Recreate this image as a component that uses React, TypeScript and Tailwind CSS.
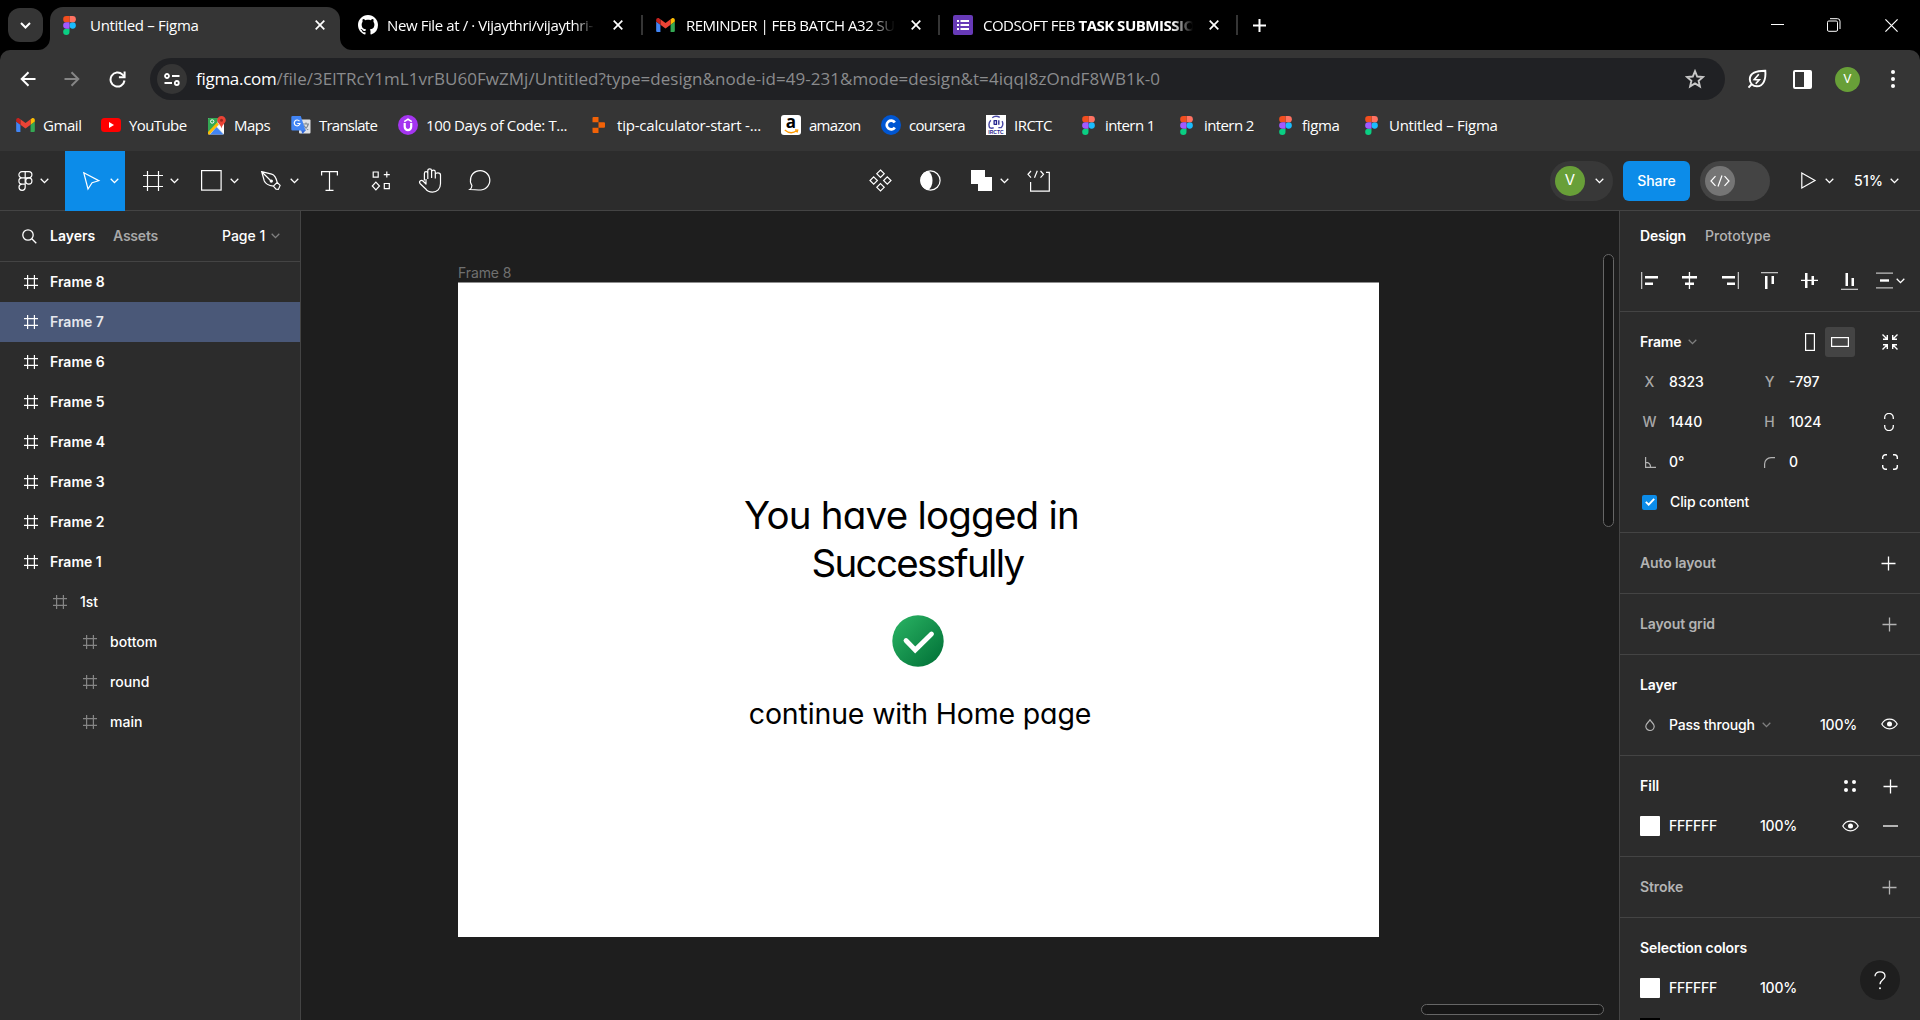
import type { ReactNode } from "react";

const INTER = "font-['Inter',sans-serif]";
const SEGOE = "font-['Open_Sans',sans-serif]";

function Chevron({ className = "" }: { className?: string }) {
  return (
    <svg className={"h-[6px] w-[9px] shrink-0 " + className} viewBox="0 0 9 6" fill="none" stroke="currentColor" strokeWidth="1.3">
      <path d="M.7 .8 4.5 4.6 8.3 .8" />
    </svg>
  );
}

function FigmaMark({ className = "" }: { className?: string }) {
  return (
    <svg className={"h-[19px] w-[13px] shrink-0 " + className} viewBox="0 0 38 57">
      <path fill="#1abcfe" d="M19 28.5a9.5 9.5 0 1 1 19 0 9.5 9.5 0 0 1-19 0z" />
      <path fill="#0acf83" d="M0 47.5A9.5 9.5 0 0 1 9.5 38H19v9.500a9.500 9.500 0 1 1-19 0z" />
      <path fill="#ff7262" d="M19 0v19h9.500a9.500 9.500 0 1 0 0-19H19z" />
      <path fill="#f24e1e" d="M0 9.500A9.500 9.500 0 0 0 9.500 19H19V0H9.500A9.500 9.500 0 0 0 0 9.500z" />
      <path fill="#a259ff" d="M0 28.500A9.500 9.500 0 0 0 9.500 38H19V19H9.500A9.500 9.500 0 0 0 0 28.500z" />
    </svg>
  );
}

function GmailMark() {
  return (
    <svg className="h-[14px] w-[19px] shrink-0" viewBox="52 42 88 66">
      <path fill="#4285f4" d="M58 108h14V74L52 59v43c0 3.320 2.690 6 6 6" />
      <path fill="#34a853" d="M120 108h14c3.320 0 6-2.690 6-6V59l-20 15" />
      <path fill="#fbbc04" d="M120 48v26l20-15v-8c0-7.420-8.470-11.650-14.400-7.200" />
      <path fill="#ea4335" d="M72 74V48l24 18 24-18v26L96 92" />
      <path fill="#c5221f" d="M52 51v8l20 15V48l-5.600-4.200c-5.940-4.450-14.400-.22-14.400 7.200" />
    </svg>
  );
}

function CloseX({ className = "" }: { className?: string }) {
  return (
    <svg className={"h-[10px] w-[10px] shrink-0 " + className} viewBox="0 0 10 10" fill="none" stroke="#fff" strokeWidth="1.7">
      <path d="M.7 .7 9.300 9.300M9.300 .7 .7 9.300" />
    </svg>
  );
}

function TabStrip() {
  return (
    <div className={"flex h-[50px] items-start bg-black text-[15px] text-white " + SEGOE}>
      <div className="ml-2 mt-2 flex h-[34px] w-[35px] items-center justify-center rounded-[12px] bg-[#353535]">
        <svg className="h-[7px] w-[11px]" viewBox="0 0 11 7" fill="none" stroke="#fff" strokeWidth="2">
          <path d="M1 1l4.500 4.500L10 1" />
        </svg>
      </div>
      <div className="relative ml-[7px] mt-[7px] flex h-[43px] w-[290px] items-center rounded-t-[13px] bg-[#353535] pb-[7px]">
        <svg className="absolute bottom-0 -left-3 h-3 w-3" viewBox="0 0 12 12"><path fill="#353535" d="M12 0v12H0A12 12 0 0 0 12 0z" /></svg>
        <svg className="absolute bottom-0 -right-3 h-3 w-3" viewBox="0 0 12 12"><path fill="#353535" d="M0 0v12h12A12 12 0 0 1 0 0z" /></svg>
        <FigmaMark className="ml-[13px]" />
        <span className="ml-[14px] w-[229px] whitespace-nowrap leading-[20px] tracking-[-0.29px]">Untitled – Figma</span>
        <CloseX className="-ml-[4px]" />
      </div>
      <div className="flex h-[50px] items-center">
        <svg className="ml-[18px] h-[20px] w-[20px] shrink-0" viewBox="0 0 16 16" fill="#fff">
          <path d="M8 0C3.580 0 0 3.580 0 8c0 3.540 2.290 6.530 5.470 7.590.4.070.55-.17.55-.38 0-.19-.01-.82-.01-1.490-2.010.37-2.530-.49-2.690-.94-.09-.23-.48-.94-.82-1.130-.28-.15-.68-.52-.01-.53.63-.01 1.080.58 1.230.82.72 1.210 1.870.87 2.330.66.07-.52.28-.87.51-1.070-1.780-.2-3.640-.89-3.640-3.950 0-.87.31-1.590.82-2.150-.08-.2-.36-1.020.08-2.120 0 0 .67-.21 2.200.82.64-.18 1.320-.27 2-.27s1.360.09 2 .27c1.530-1.040 2.200-.82 2.200-.82.44 1.100.16 1.920.08 2.120.51.56.82 1.270.82 2.150 0 3.070-1.870 3.750-3.650 3.950.29.25.54.73.54 1.480 0 1.070-.01 1.930-.01 2.200 0 .21.15.46.55.38A8.010 8.010 0 0 0 16 8c0-4.420-3.580-8-8-8z" />
        </svg>
        <span className="ml-[9px] w-[208px] whitespace-nowrap leading-[22px] tracking-[-0.4px] [mask-image:linear-gradient(to_right,#000_90%,transparent)]">New File at / · Vijaythri/vijaythri-</span>
        <CloseX className="ml-[18px]" />
        <i className="ml-[18px] h-5 w-[2px] bg-[#353535]" />
        <span className="ml-[13px] flex"><GmailMark /></span>
        <span className="ml-[11px] w-[209px] whitespace-nowrap leading-[22px] tracking-[-0.5px] [mask-image:linear-gradient(to_right,#000_88%,transparent)]">REMINDER | FEB BATCH A32 SU</span>
        <CloseX className="ml-[16px]" />
        <i className="ml-[17px] h-5 w-[2px] bg-[#353535]" />
        <span className="ml-[13px] flex h-5 w-5 items-center justify-center rounded-[2px] bg-[#673ab7]">
          <svg className="h-[10px] w-3" viewBox="0 0 12 10" fill="#fff">
            <path d="M0 0h2v2H0zM3.500 0H12v2H3.500zM0 4h2v2H0zM3.500 4H12v2H3.500zM0 8h2v2H0zM3.500 8H12v2H3.500z" />
          </svg>
        </span>
        <span className="ml-[10px] w-[210px] whitespace-nowrap leading-[22px] tracking-[-0.5px] [mask-image:linear-gradient(to_right,#000_90%,transparent)]">CODSOFT FEB <b className="font-bold tracking-[-0.5px]">TASK SUBMISSIO</b></span>
        <CloseX className="ml-[16px]" />
        <i className="ml-[17px] h-5 w-[2px] bg-[#353535]" />
        <svg className="ml-[15px] h-[13px] w-[13px]" viewBox="0 0 13 13" fill="none" stroke="#fff" strokeWidth="2"><path d="M6.500 0v13M0 6.500h13" /></svg>
      </div>
      <div className="ml-auto flex h-[50px] items-center pr-[22px]">
        <svg className="h-[14px] w-[13px]" viewBox="0 0 13 14" stroke="#fff"><path d="M0 6.500h13" /></svg>
        <svg className="ml-[43px] h-[14px] w-[14px]" viewBox="0 0 14 14" fill="none" stroke="#fff">
          <rect x=".5" y="3" width="10" height="10.300" rx="1.300" /><path d="M3 .7h7.500a2.500 2.500 0 0 1 2.500 2.500V11" />
        </svg>
        <svg className="ml-[44px] h-[13px] w-[13px]" viewBox="0 0 13 13" fill="none" stroke="#fff" strokeWidth="1.200"><path d="M.4 .4l12.200 12.200M12.600 .4.4 12.600" /></svg>
      </div>
    </div>
  );
}

function AddressRow() {
  return (
    <div className={"flex h-[58px] items-center " + SEGOE}>
      <svg className="ml-[20px] h-4 w-4" viewBox="0 0 16 16" fill="none" stroke="#fff" strokeWidth="2"><path d="M15.500 8H2M8.500 1.200 1.700 8l6.800 6.800" /></svg>
      <svg className="ml-[28px] h-4 w-4" viewBox="0 0 16 16" fill="none" stroke="#858585" strokeWidth="2"><path d="M.5 8H14M7.500 1.200 14.300 8l-6.800 6.800" /></svg>
      <svg className="ml-[29px] h-[17px] w-[17px]" viewBox="0 0 17 17" fill="none" stroke="#fff" strokeWidth="2">
        <path d="M15.500 9.500A7 7 0 1 1 13.500 3.600l1.800 1.800" /><path d="M15.600 .5v5.700h-5.700" />
      </svg>
      <div className="ml-[24px] flex h-[42px] w-[1575px] items-center rounded-full bg-[#202124]">
        <div className="ml-[7px] flex h-[30px] w-[30px] items-center justify-center rounded-full bg-[#353535]">
          <svg className="h-[13px] w-4" viewBox="0 0 16 13" fill="none" stroke="#fff" strokeWidth="1.800">
            <circle cx="3" cy="3" r="2" /><path d="M8 3h7.500M.5 10H8" /><circle cx="12.800" cy="10" r="2" />
          </svg>
        </div>
        <div className="ml-[9px] whitespace-nowrap text-[17px] leading-[24px] text-white">
          <span className="tracking-[-0.28px]">figma.com</span><span className="tracking-[0.04px] text-[#8a8b8d]">/file/3ElTRcY1mL1vrBU60FwZMj/Untitled?type=design&amp;node-id=49-231&amp;mode=design&amp;t=4iqqI8zOndF8WB1k-0</span>
        </div>
        <svg className="ml-auto mr-[20px] h-5 w-5" viewBox="0 0 20 20" fill="none" stroke="#c8c8c8" strokeWidth="1.900">
          <path d="M10 2.200l2.200 5.300 5.800.5-4.400 3.800 1.300 5.600L10 14.400l-4.900 3 1.300-5.600L2 8l5.800-.5z" />
        </svg>
      </div>
      <svg className="ml-[22px] h-[20px] w-[20px]" viewBox="0 0 20 20" fill="none" stroke="#fff" strokeWidth="1.900">
        <path d="M18.300 1.700c.8 9-2 15.600-8.300 15.600a7 7 0 0 1-7.200-7C2.800 4.300 9 1.600 18.300 1.700zM1.500 18.700l2.900-3.200" />
        <path d="M11.800 5.300 7.300 10.500l5 .3-3.600 4" strokeWidth="1.700" />
      </svg>
      <svg className="ml-[26px] h-[19px] w-[19px]" viewBox="0 0 19 19"><path fill="#fff" fillRule="evenodd" d="M2 0h15a2 2 0 0 1 2 2v15a2 2 0 0 1-2 2H2a2 2 0 0 1-2-2V2a2 2 0 0 1 2-2zm0 2v15h9V2z" /></svg>
      <div className="ml-[23px] flex h-[25px] w-[25px] items-center justify-center rounded-full bg-[#689f38] font-['Roboto',sans-serif] text-[13px] text-white">V</div>
      <svg className="ml-[31px] h-[18px] w-[4px]" viewBox="0 0 4 18" fill="#fff"><circle cx="2" cy="2" r="2" /><circle cx="2" cy="9" r="2" /><circle cx="2" cy="16" r="2" /></svg>
    </div>
  );
}

function Bookmark({ icon, label, box, text }: { icon: ReactNode; label: string; box: string; text: string }) {
  return (
    <div className={"flex shrink-0 items-center " + box}>
      {icon}
      <span className={"whitespace-nowrap leading-[20px] " + text}>{label}</span>
    </div>
  );
}

function Bookmarks() {
  return (
    <div className={"flex h-[43px] items-start pt-[7px] pl-4 text-[15px] text-white " + SEGOE}>
      <Bookmark box="h-5 w-[85px]" text="ml-[8px] tracking-[-0.44px]" label="Gmail" icon={<GmailMark />} />
      <Bookmark box="h-5 w-[107px]" text="ml-[8px] tracking-[-0.60px]" label="YouTube" icon={
        <svg className="h-[14px] w-5" viewBox="0 0 20 14"><rect width="20" height="14" rx="3.500" fill="red" /><path fill="#fff" d="M8 4v6l5-3z" /></svg>
      } />
      <Bookmark box="h-5 w-[83px]" text="ml-[8px] tracking-[-0.5px]" label="Maps" icon={
        <svg className="h-[19px] w-[18px]" viewBox="0 0 18 19">
          <rect y="2" width="16" height="16.500" rx="1" fill="#e8eaed" />
          <path fill="#34a853" d="M0 3a1 1 0 0 1 1-1h9L9 9l-9 8z" />
          <path fill="#4285f4" d="M2 18.500 8.500 11l7 7.500z" />
          <path fill="#fbbc04" d="M0 16 9 6.500l1.800 2L1.500 18.500H1a1 1 0 0 1-1-1z" />
          <path fill="#fff" d="M9.500 10.500l6.500 7V9z" />
          <circle cx="4.200" cy="5.500" r="1.700" fill="none" stroke="#fff" />
          <path fill="#ea4335" d="M13.500 0A4.300 4.300 0 0 0 9.200 4.300c0 2.700 3.500 4 4.300 8.200.8-4.200 4.300-5.500 4.300-8.200A4.300 4.300 0 0 0 13.500 0z" />
          <circle cx="13.500" cy="4.300" r="1.500" fill="#99281f" />
        </svg>
      } />
      <Bookmark box="h-5 w-[107px]" text="ml-[8px] tracking-[-0.77px]" label="Translate" icon={
        <svg className="h-[20px] w-5" viewBox="0 0 20 20">
          <rect x="8" y="4.500" width="11.500" height="14" rx="1" fill="#dfe1e5" />
          <path d="M12 9h6M15 7.500V9m2.200 0c-.4 2.600-2 4.600-4.200 5.800M13 10.500c.9 2 2.300 3.300 4.200 4.300" stroke="#7b8794" strokeWidth="1.200" fill="none" />
          <path fill="#3367d6" d="M10 15h5l-3.500 4z" />
          <path fill="#4285f4" d="M1.500 1h8.300l4.700 14.500h-13A1.200 1.200 0 0 1 .3 14.300V2.200A1.200 1.200 0 0 1 1.500 1z" />
          <path d="M8.500 6.200A2.900 2.900 0 1 0 9 8.500H6.300" stroke="#fff" strokeWidth="1.200" fill="none" />
        </svg>
      } />
      <Bookmark box="h-5 w-[194px]" text="ml-[8px] tracking-[-0.38px]" label="100 Days of Code: T..." icon={
        <svg className="h-5 w-5" viewBox="0 0 20 20"><circle cx="10" cy="10" r="10" fill="#a435f0" /><path d="M6.700 8v3.800a3.200 3.200 0 0 0 6.500 0V8" stroke="#fff" strokeWidth="2.200" fill="none" /><path d="M6.200 6.600 10 4.300l3.800 2.300" stroke="#fff" strokeWidth="1.600" fill="none" /></svg>
      } />
      <Bookmark box="h-5 w-[189px]" text="ml-[11px] tracking-[-0.21px]" label="tip-calculator-start -..." icon={
        <svg className="h-4 w-[14px]" viewBox="0 0 14 16"><path fill="#f26207" d="M1.500 0h5v5.300h-6V1a1 1 0 0 1 1-1zM6.500 5.300H12a1 1 0 0 1 1 1v3.400a1 1 0 0 1-1 1H6.500zM.5 10.700h6V16h-5a1 1 0 0 1-1-1z" /></svg>
      } />
      <Bookmark box="h-5 w-[100px]" text="ml-[8px] tracking-[-0.72px]" label="amazon" icon={
        <span className="relative flex h-5 w-5 justify-center rounded-[3px] bg-white text-[17px] font-bold leading-[13px] text-black">
          a
          <svg className="absolute bottom-[1px] left-[3px] h-[5px] w-[15px]" viewBox="0 0 15 5" fill="none" stroke="#f90" strokeWidth="1.300"><path d="M.8 1c3.800 3.300 8.300 3.400 12 .8M11 .8l2.700.2-.7 2.500" /></svg>
        </span>
      } />
      <Bookmark box="h-5 w-[105px]" text="ml-[8px] tracking-[-0.7px]" label="coursera" icon={
        <svg className="h-5 w-5" viewBox="0 0 20 20"><circle cx="10" cy="10" r="10" fill="#0056d2" /><path d="M13.800 7.600A4.400 4.400 0 1 0 13.800 12.400" stroke="#fff" strokeWidth="2.700" fill="none" /></svg>
      } />
      <Bookmark box="h-5 w-[96px]" text="ml-[8px] tracking-[-0.52px]" label="IRCTC" icon={
        <span className="relative flex h-5 w-5 items-end justify-center bg-white font-['Liberation_Sans',sans-serif] text-[5px] font-bold leading-[5px] text-[#25258e]">
          <svg className="absolute left-0 top-0 h-[15px] w-5" viewBox="0 0 20 16" fill="none" stroke="#4a4aa6" strokeWidth="1.500"><path d="M6 3C8.500 .8 11 .8 14 2.500M16.500 6.500c1.500 3 1 5-1 7h-3M4.500 5.500c-2 2-2.500 5-1.300 8 1.700.8 3 .8 4.300 0" /><path d="M8 5.500v5M8 6h2.500v4H8M13 5.500v5" stroke="#25258e" strokeWidth="1.400" /></svg>
          IRCTC
        </span>
      } />
      <Bookmark box="h-5 w-[98px]" text="ml-[10px] tracking-[-0.6px]" label="intern 1" icon={<FigmaMark />} />
      <Bookmark box="h-5 w-[99px]" text="ml-[11px] tracking-[-0.6px]" label="intern 2" icon={<FigmaMark />} />
      <Bookmark box="h-5 w-[86px]" text="ml-[10px] tracking-[-0.34px]" label="figma" icon={<FigmaMark />} />
      <Bookmark box="h-5" text="ml-[11px] tracking-[-0.29px]" label="Untitled – Figma" icon={<FigmaMark />} />
    </div>
  );
}

const ic = "shrink-0 overflow-visible";

function FigmaToolbar() {
  return (
    <div className={"flex h-[60px] items-center border-b border-[#444] bg-[#2c2c2c] text-white " + INTER}>
      <svg className={ic + " ml-[18px] h-[20px] w-[15px]"} viewBox="0 0 15 20" fill="none" stroke="#fff" strokeWidth="1.200">
        <path d="M7.200 .7H4a3.100 3.100 0 0 0 0 6.200h3.200zM7.200 .7h3.600a3.100 3.100 0 0 1 0 6.200H7.200zM7.200 6.900H4a3.100 3.100 0 0 0 0 6.200h3.200zM4 13.100a3.100 3.100 0 1 0 3.200 3.100v-3.100z" /><circle cx="10.800" cy="10" r="3.100" />
      </svg>
      <Chevron className="ml-[7px]" />
      <div className="ml-[16px] flex h-[60px] w-[60px] items-center bg-[#0c8ce9]">
        <svg className={ic + " ml-[18px] h-[18px] w-[17px]"} viewBox="0 0 17 18" fill="none" stroke="#fff" strokeWidth="1.200"><path d="M.8 .8l15 7.900-6.700 2L5 17z" /></svg>
        <Chevron className="ml-[10px]" />
      </div>
      <svg className={ic + " ml-[18px] h-[20px] w-[20px]"} viewBox="0 0 20 20" fill="none" stroke="#fff" strokeWidth="1.200"><path d="M4.500 0v20M15.500 0v20M0 4.500h20M0 15.500h20" /></svg>
      <Chevron className="ml-[7px]" />
      <svg className={ic + " ml-[22px] h-[21px] w-[21px]"} viewBox="0 0 21 21" fill="none" stroke="#fff" strokeWidth="1.200"><rect x=".6" y=".6" width="19.500" height="19.500" /></svg>
      <Chevron className="ml-[8px]" />
      <svg className={ic + " ml-[22px] h-[20px] w-[20px]"} viewBox="0 0 20 20" fill="none" stroke="#fff" strokeWidth="1.200">
        <path d="M.7 .7l10 2.400c2.500.7 4.500 3.800 5.500 8.200l-3.800 3.900C7.500 14.500 4.500 12.800 3.300 10zM.7 .7l8.600 8.500M16.200 11.300l2.900 3.100-1.700 4-2.400-.3-2.600-2.900" /><circle cx="10.300" cy="10.100" r="1.700" fill="#fff" stroke="none" />
      </svg>
      <Chevron className="ml-[9px]" />
      <svg className={ic + " ml-[22px] h-[20px] w-[17px]"} viewBox="0 0 17 20" fill="none" stroke="#fff" strokeWidth="1.200"><path d="M.6 4.500V.6h15.800v3.900M8.500 .6v18.800M4.500 19.400h8" /></svg>
      <svg className={ic + " ml-[34px] h-[19px] w-[19px]"} viewBox="0 0 19 19" fill="none" stroke="#fff" strokeWidth="1.200">
        <path d="M1.200 1h5v5.200h-5zM12.300 12.500h5v5.200h-5zM14.800 .6v6M11.800 3.600h6M3.900 11.200l3.600 3.800-3.600 3.800L.3 15z" />
      </svg>
      <svg className={ic + " ml-[28px] h-[25px] w-[23px]"} viewBox="0 0 23 25" fill="none" stroke="#fff" strokeWidth="1.200" strokeLinejoin="round">
        <path d="M5.400 12.500V5.500c0-2.400 3.400-2.400 3.400 0V11M8.800 10V2.700c0-2.500 3.800-2.500 3.800 0V10M12.600 4c0-2.400 3.700-2.400 3.700 0v6.500M16.300 6.500c0-2.200 5.200-2.500 5.200.5v8.500c0 5.500-3.500 8.700-8 8.700-3.500 0-5.500-1.200-7-3.500L1 15.500c-1.500-2.500 1.500-4 3-2.500l3 3V11" />
      </svg>
      <svg className={ic + " ml-[27px] h-[21px] w-[23px]"} viewBox="0 0 23 21" fill="none" stroke="#fff" strokeWidth="1.200"><path d="M.9 19.500c1.700-1.200 2-2.500 2-4A9.700 9.700 0 1 1 12 20C8 20 5 19.600 .9 19.500z" /></svg>

      <svg className={ic + " ml-[377px] h-[23px] w-[23px]"} viewBox="0 0 23 23" fill="none" stroke="#fff" strokeWidth="1.200"><path d="M11.500 1l3.700 3.700-3.700 3.700-3.700-3.700zM11.500 14.600l3.700 3.700-3.700 3.700-3.700-3.700zM4.700 7.800l3.700 3.700-3.700 3.700L1 11.500zM18.300 7.800l3.700 3.700-3.700 3.700-3.700-3.700z" /></svg>
      <svg className={ic + " ml-[28px] h-[21px] w-[21px]"} viewBox="0 0 21 21"><circle cx="10.500" cy="10.500" r="9.600" fill="none" stroke="#fff" strokeWidth="1.200" /><path fill="#fff" d="M8 .9C14 4 14 17 8 20.100A9.800 9.800 0 0 1 8 .9z" /></svg>
      <svg className={ic + " ml-[30px] h-[21px] w-[21px]"} viewBox="0 0 21 21" fill="#fff"><path d="M0 0h14v7h7v14H7v-7H0z" /></svg>
      <Chevron className="ml-[8px]" />
      <svg className={ic + " ml-[18px] h-[22px] w-[23px]"} viewBox="0 0 23 22" fill="none" stroke="#fff" strokeWidth="1.200"><path d="M4 1 1 4.300l3 3.300M13.500 1l3 3.300-3 3.300M10.300 .8 7.500 7.700M19 2.300h3.300v18.800H3.600v-9" /></svg>

      <div className="ml-[500px] flex h-10 w-[63px] items-center rounded-full bg-[#383838]">
        <div className="ml-[5px] flex h-[30px] w-[30px] items-center justify-center rounded-full bg-[#689f38] text-[15px]">V</div>
        <Chevron className="ml-[10px]" />
      </div>
      <div className="ml-[10px] flex h-10 w-[67px] items-center justify-center rounded-[6px] bg-[#0c8ce9] text-[14px] font-medium tracking-[-0.1px]">Share</div>
      <div className="ml-[10px] flex h-10 w-[70px] items-center rounded-full bg-[#444]">
        <div className="ml-[5px] flex h-[30px] w-[30px] items-center justify-center rounded-full bg-[#757575]">
          <svg className="h-[12px] w-[20px]" viewBox="0 0 20 12" fill="none" stroke="#fff" strokeWidth="1.200"><path d="M5.500 1.200 1 6l4.500 4.800M14.500 1.200 19 6l-4.500 4.800M12 .5 8 11.500" /></svg>
        </div>
      </div>
      <svg className={ic + " ml-[31px] h-[17px] w-[15px]"} viewBox="0 0 15 17" fill="none" stroke="#fff" strokeWidth="1.200"><path d="M.8 1v15l13.200-7.500z" /></svg>
      <Chevron className="ml-[9px]" />
      <span className="ml-[20px] w-[36px] text-[14px] font-[450] tracking-[0.3px]">51%</span>
      <Chevron />
    </div>
  );
}

function FrameIcon({ className = "" }: { className?: string }) {
  return (
    <svg className={"h-[14px] w-[14px] shrink-0 " + className} viewBox="0 0 14 14" fill="none" stroke="currentColor" strokeWidth="1.200"><path d="M3.600 0v14M10.400 0v14M0 3.600h14M0 10.400h14" /></svg>
  );
}

const frames = ["Frame 8", "Frame 7", "Frame 6", "Frame 5", "Frame 4", "Frame 3", "Frame 2", "Frame 1"];
const nested = ["bottom", "round", "main"];

const row = "flex h-10 items-center [&>span]:mb-[2px] ";

function LayersPanel() {
  return (
    <aside className="w-[301px] shrink-0 border-r border-[#444] bg-[#2c2c2c] text-[14px] font-[450] text-white">
      <div className="flex h-[51px] items-center border-b border-[#444] font-semibold [&>span]:mb-[2px]">
        <svg className="ml-[22px] h-[15px] w-[15px]" viewBox="0 0 15 15" fill="none" stroke="#fff" strokeWidth="1.300"><circle cx="6" cy="6" r="5.200" /><path d="M9.800 9.800l4.500 4.500" /></svg>
        <span className="ml-[13px] w-[63px]">Layers</span>
        <span className="w-[109px] tracking-[-0.2px] text-[#a8a8a8]">Assets</span>
        <span className="w-[49px] font-medium">Page 1</span>
        <Chevron className="text-[#808080]" />
      </div>
      {frames.map((f) => (
        <div key={f} className={row + "pl-6 font-semibold " + (f === "Frame 7" ? "bg-[#4a5878] text-[#e6e8ee]" : "")}>
          <FrameIcon className="text-white" />
          <span className="ml-[12px]">{f}</span>
        </div>
      ))}
      <div className={row + "pl-[53px]"}><FrameIcon className="text-[#858585]" /><span className="ml-[13px]">1st</span></div>
      {nested.map((n) => (
        <div key={n} className={row + "pl-[83px]"}><FrameIcon className="text-[#858585]" /><span className="ml-[13px] tracking-[0.05px]">{n}</span></div>
      ))}
    </aside>
  );
}

function Canvas() {
  return (
    <main className="relative flex-1 overflow-hidden bg-[#1e1e1e]">
      <div className="ml-[157px] mt-[53px] text-[14px] leading-[18px] tracking-[-0.1px] text-[#707070]">Frame 8</div>
      <div className="ml-[157px] flex h-[655px] w-[921px] flex-col items-center border-t border-[#8e8e8e] bg-white text-black">
        <p className="mt-[209px] pr-[14px] text-[38.500px] leading-[47px] tracking-[-0.780px] [font-feature-settings:'cv11']">You have logged in</p>
        <p className="mt-[1px] pr-[2px] text-[38.500px] leading-[47px] tracking-[-1.650px] [font-feature-settings:'cv11']">Successfully</p>
        <svg className="mr-[1px] mt-[28px] h-[52px] w-[52px]" viewBox="0 0 52 52">
          <defs><linearGradient id="ok" x1="0" y1="0" x2="1" y2="1"><stop offset=".1" stopColor="#27ae60" /><stop offset=".9" stopColor="#04753a" /></linearGradient></defs>
          <circle cx="26" cy="26" r="25.700" fill="url(#ok)" />
          <path d="M14 25.500 23.200 35 39.500 19" stroke="#fff" strokeWidth="4.800" strokeLinecap="round" fill="none" />
        </svg>
        <p className="mt-[25px] pl-[3px] text-[28.500px] leading-[44px] tracking-[-0.160px] [font-feature-settings:'cv11']">continue with Home page</p>
      </div>
      <div className="absolute left-[1302px] top-[43px] h-[273px] w-[11px] rounded-full border border-[#666] bg-[#161616]" />
      <div className="absolute left-[1120px] top-[793px] h-[11px] w-[183px] rounded-full border border-[#666] bg-[#161616]" />
    </main>
  );
}

function Plus({ className = "text-white" }: { className?: string }) {
  return <svg className={"h-[15px] w-[15px] shrink-0 " + className} viewBox="0 0 15 15" fill="none" stroke="currentColor" strokeWidth="1.300"><path d="M7.500 .5v14M.5 7.500h14" /></svg>;
}

function Eye() {
  return (
    <svg className="h-[12px] w-[17px] shrink-0" viewBox="0 0 17 12" fill="none" stroke="#fff" strokeWidth="1.200"><path d="M.8 6C4.200-.4 12.800-.4 16.200 6 12.800 12.400 4.200 12.400 .8 6z" /><circle cx="8.500" cy="6" r="2.500" fill="#fff" stroke="none" /></svg>
  );
}

function Section({ children, className = "" }: { children: ReactNode; className?: string }) {
  return <section className={"border-b border-[#444] pl-5 " + className}>{children}</section>;
}

function ColorRow({ children }: { children?: ReactNode }) {
  return (
    <div className={row}>
      <i className="h-5 w-5 rounded-[1px] bg-white" />
      <span className="ml-[9px] w-[91px] tracking-[-0.26px]">FFFFFF</span>
      <span className="w-[82px] tracking-[-0.2px]">100%</span>
      {children}
    </div>
  );
}

function DesignPanel() {
  const a = "h-[17px] shrink-0";
  const key = "flex w-[19px] justify-center text-[#a8a8a8]";
  return (
    <aside className="relative w-[301px] shrink-0 overflow-hidden border-l border-[#444] bg-[#2c2c2c] text-[14px] font-[450] text-white">
      <Section className="h-[101px]">
        <div className="flex h-[51px] items-center [&>span]:mb-[2px]">
          <span className="w-[65px] font-semibold tracking-[-0.18px]">Design</span>
          <span className="text-[#b3b3b3]">Prototype</span>
        </div>
        <div className="flex h-[37px] items-center fill-white">
          <svg className={a + " ml-[1px] w-[17px]"} viewBox="0 0 17 17"><path opacity=".7" d="M0 0h1.300v17H0z" /><path d="M4 4h13v2.500H4zM4 10.500h8V13H4z" /></svg>
          <svg className={a + " ml-[24px] w-[15px]"} viewBox="0 0 15 17"><path d="M6.800 0h1.300v17H6.800zM0 4h15v2.500H0zM3 10.500h9V13H3z" /></svg>
          <svg className={a + " ml-[25px] w-[17px]"} viewBox="0 0 17 17"><path opacity=".7" d="M15.700 0H17v17h-1.300z" /><path d="M0 4h13v2.500H0zM5 10.500h8V13H5z" /></svg>
          <svg className={a + " ml-[22px] w-[17px]"} viewBox="0 0 17 17"><path opacity=".7" d="M0 0h17v1.300H0z" /><path d="M4 4h2.500v13H4zM10.500 4H13v8h-2.500z" /></svg>
          <svg className={a + " ml-[23px] w-[17px]"} viewBox="0 0 17 17"><path d="M0 7.800h17v1.300H0zM4 1h2.500v15H4zM10.500 4H13v9h-2.500z" /></svg>
          <svg className={a + " ml-[23px] mt-[1px] w-[17px]"} viewBox="0 0 17 17"><path opacity=".7" d="M0 15.700h17V17H0z" /><path d="M4.500 0H7v13H4.500zM10.500 5H13v8h-2.500z" /></svg>
          <svg className={a + " ml-[18px] w-[17px]"} viewBox="0 0 17 17"><path opacity=".7" d="M0 .5h17v1.300H0zM0 15.200h17v1.300H0z" /><path d="M4 7.300h9v2.400H4z" /></svg>
          <Chevron className="ml-[3px] fill-none" />
        </div>
      </Section>

      <Section className="h-[221px] pt-[10px]">
        <div className={row}>
          <span className="w-[48px] font-semibold tracking-[-0.2px]">Frame</span>
          <Chevron className="text-[#808080]" />
          <svg className="ml-[108px] h-[18px] w-[10px]" viewBox="0 0 10 18" fill="none" stroke="#fff" strokeWidth="1.200"><rect x=".6" y=".6" width="8.800" height="16.800" /></svg>
          <i className="ml-[10px] flex h-[30px] w-[30px] items-center justify-center rounded-[3px] bg-[#444]">
            <svg className="h-[10px] w-[18px]" viewBox="0 0 18 10" fill="none" stroke="#fff" strokeWidth="1.200"><rect x=".6" y=".6" width="16.800" height="8.800" /></svg>
          </i>
          <svg className="ml-[27px] h-[16px] w-[16px]" viewBox="0 0 16 16" fill="none" stroke="#fff" strokeWidth="1.400"><path d="M.5 .5l4.500 4.500M5.300 1v4.300H1M15.500 .5 11 5M10.700 1v4.300H15M.5 15.500 5 11M5.300 15v-4.300H1M15.500 15.500 11 11M10.700 15v-4.300H15" /></svg>
        </div>
        <div className={row}>
          <span className={key}>X</span><span className="ml-[10px] w-[91px] tracking-[-0.1px]">8323</span>
          <span className={key}>Y</span><span className="ml-[10px]">-797</span>
        </div>
        <div className={row}>
          <span className={key}>W</span><span className="ml-[10px] w-[91px]">1440</span>
          <span className={key}>H</span><span className="ml-[10px] w-[95px]">1024</span>
          <svg className="h-[18px] w-[10px]" viewBox="0 0 10 18" fill="none" stroke="#fff" strokeWidth="1.300"><path d="M.7 6V4.700a4.300 4.300 0 0 1 8.600 0V6M.7 12v1.300a4.300 4.300 0 0 0 8.600 0V12" /></svg>
        </div>
        <div className={row}>
          <svg className="ml-[5px] h-[11px] w-[11px]" viewBox="0 0 11 11" fill="none" stroke="#b3b3b3" strokeWidth="1.200"><path d="M.6 0v10.300H11M.6 5.300c3.200 0 5 1.700 5 5" /></svg>
          <span className="ml-[13px] w-[95px]">0°</span>
          <svg className="h-[11px] w-[11px]" viewBox="0 0 11 11" fill="none" stroke="#b3b3b3" strokeWidth="1.200"><path d="M.6 11V7A6.400 6.400 0 0 1 7 .6h4" /></svg>
          <span className="ml-[14px] w-[93px]">0</span>
          <svg className="h-[16px] w-[16px]" viewBox="0 0 16 16" fill="none" stroke="#fff" strokeWidth="1.400"><path d="M.7 5V3.500A2.800 2.800 0 0 1 3.500 .7H5M11 .7h1.500a2.800 2.800 0 0 1 2.800 2.800V5M15.300 11v1.500a2.800 2.800 0 0 1-2.800 2.800H11M5 15.300H3.500a2.800 2.800 0 0 1-2.800-2.800V11" /></svg>
        </div>
        <div className={row}>
          <i className="ml-[2px] flex h-[15px] w-[15px] items-center justify-center rounded-[2px] bg-[#0c8ce9]">
            <svg className="h-[8px] w-[10px]" viewBox="0 0 10 8" fill="none" stroke="#fff" strokeWidth="1.900"><path d="M.8 3.800l2.900 2.900L9.200 .9" /></svg>
          </i>
          <span className="ml-[13px] tracking-[-0.12px]">Clip content</span>
        </div>
      </Section>

      <Section className="flex h-[61px] items-center pr-[24px]"><span className="mb-[2px] mr-auto font-semibold tracking-[-0.12px] text-[#b3b3b3]">Auto layout</span><Plus /></Section>
      <Section className="flex h-[61px] items-center pr-[23px]"><span className="mb-[2px] mr-auto font-semibold tracking-[-0.12px] text-[#b3b3b3]">Layout grid</span><Plus className="text-[#b3b3b3]" /></Section>

      <Section className="h-[101px] pt-[10px]">
        <div className={row + "font-semibold tracking-[-0.1px]"}><span>Layer</span></div>
        <div className={row}>
          <svg className="ml-[5px] h-[12px] w-[10px]" viewBox="0 0 10 12" fill="none" stroke="#b3b3b3" strokeWidth="1.200"><path d="M5 .8C3.500 3.300 .8 4.800 .8 7.300a4.200 4.200 0 0 0 8.400 0C9.200 4.800 6.500 3.300 5 .8z" /></svg>
          <span className="ml-[14px] w-[93px] tracking-[-0.2px]">Pass through</span>
          <Chevron className="text-[#808080]" />
          <span className="ml-[49px] w-[61px] tracking-[-0.2px]">100%</span>
          <i className="mb-[2px]"><Eye /></i>
        </div>
      </Section>

      <Section className="h-[101px] pt-[10px]">
        <div className={row}>
          <span className="w-[204px] font-semibold">Fill</span>
          <svg className="h-[12px] w-[12px] fill-white" viewBox="0 0 12 12"><circle cx="2" cy="2" r="2" /><circle cx="10" cy="2" r="2" /><circle cx="2" cy="10" r="2" /><circle cx="10" cy="10" r="2" /></svg>
          <Plus className="ml-[27px] text-white" />
        </div>
        <ColorRow>
          <Eye />
          <svg className="ml-[24px] h-[2px] w-[15px]" viewBox="0 0 15 2" stroke="#fff" strokeWidth="1.300"><path d="M0 1h15" /></svg>
        </ColorRow>
      </Section>

      <Section className="flex h-[61px] items-center pr-[23px]"><span className="mb-[2px] mr-auto font-semibold tracking-[-0.1px] text-[#b3b3b3]">Stroke</span><Plus className="text-[#b3b3b3]" /></Section>

      <section className="pl-5 pt-[10px]">
        <div className={row + "font-semibold tracking-[-0.11px]"}><span>Selection colors</span></div>
        <ColorRow />
        <div className={row}><i className="h-5 w-5 bg-black" /></div>
      </section>

      <div className="absolute left-[240px] top-[749px] flex h-10 w-10 items-center justify-center rounded-full bg-[#1e1e1e]">
        <svg className="h-[19px] w-[12px]" viewBox="0 0 12 19" fill="none" stroke="#fff" strokeWidth="1.300"><path d="M1 5.200C1 2.500 3.200 .8 6 .8s5 1.700 5 4.400c0 3.400-5 4-5 8.100" /><circle cx="6" cy="17.300" r="1" fill="#fff" stroke="none" /></svg>
      </div>
    </aside>
  );
}

export default function App() {
  return (
    <div className="flex h-[1020px] w-[1920px] flex-col overflow-hidden bg-black">
      <TabStrip />
      <div className="rounded-t-[10px] bg-[#353535]">
        <AddressRow />
        <Bookmarks />
      </div>
      <FigmaToolbar />
      <div className={"flex min-h-0 flex-1 " + INTER}>
        <LayersPanel />
        <Canvas />
        <DesignPanel />
      </div>
    </div>
  );
}
